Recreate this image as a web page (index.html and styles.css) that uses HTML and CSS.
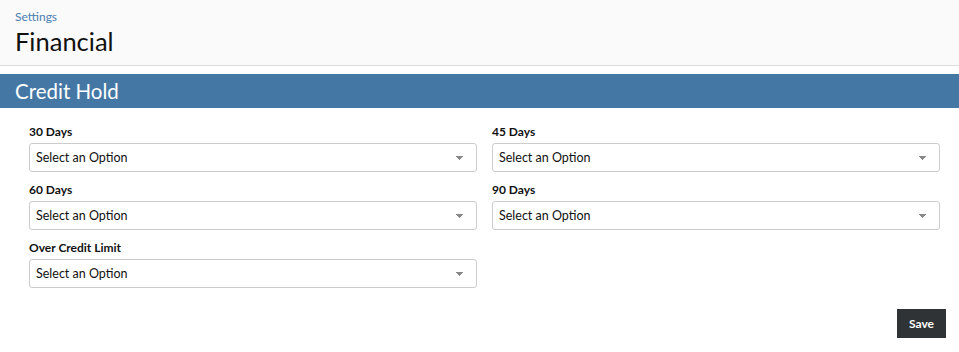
FILE: index.html
```html
<!DOCTYPE html>
<html lang="en">
<head>
    <meta charset="UTF-8">
    <meta name="viewport" content="width=device-width, initial-scale=1.0">
    <title>Financial</title>
    <link rel="stylesheet" href="styles.css">
</head>
<body>
    <div class="page-header">
        <a href="#" class="crumb">Settings</a>
        <h1>Financial</h1>
    </div>

    <div class="section-bar">Credit Hold</div>

    <form class="settings-form" id="creditHoldForm">
        <div class="field-grid">
            <div class="field">
                <label for="days30">30 Days</label>
                <select id="days30" name="days30">
                    <option>Select an Option</option>
                </select>
            </div>
            <div class="field">
                <label for="days45">45 Days</label>
                <select id="days45" name="days45">
                    <option>Select an Option</option>
                </select>
            </div>
            <div class="field">
                <label for="days60">60 Days</label>
                <select id="days60" name="days60">
                    <option>Select an Option</option>
                </select>
            </div>
            <div class="field">
                <label for="days90">90 Days</label>
                <select id="days90" name="days90">
                    <option>Select an Option</option>
                </select>
            </div>
            <div class="field">
                <label for="overLimit">Over Credit Limit</label>
                <select id="overLimit" name="overLimit">
                    <option>Select an Option</option>
                </select>
            </div>
        </div>
        <div class="actions">
            <button type="submit" class="btn">Save</button>
        </div>
    </form>
</body>
</html>
```

FILE: styles.css
```css
body {
    font-family: 'Lato', 'Liberation Sans', sans-serif;
    margin: 0;
    padding: 0;
    background-color: #fff;
    color: #111;
}
.page-header {
    background-color: #fafafa;
    border-bottom: 1px solid #dcdcdc;
    padding: 9px 15px 10px;
    height: 46px;
}
.crumb {
    display: block;
    color: #4a7db0;
    font-size: 12px;
    text-decoration: none;
    line-height: 15px;
}
h1 {
    margin: 3px 0 0;
    font-size: 25.5px;
    font-weight: 400;
    line-height: 28px;
}
.section-bar {
    margin-top: 8px;
    background-color: #4577a5;
    color: #fff;
    font-size: 20.5px;
    line-height: 34px;
    padding: 0 15px;
}
.settings-form {
    padding: 15px 19px 0 29px;
}
.field-grid {
    display: grid;
    grid-template-columns: 1fr 1fr;
    column-gap: 15px;
    row-gap: 9px;
}
.field label {
    display: block;
    font-size: 12px;
    font-weight: 700;
    line-height: 14px;
    margin: 2px 0 4px;
}
select {
    appearance: none;
    -webkit-appearance: none;
    width: 100%;
    height: 29px;
    padding: 0 28px 0 6px;
    font-family: inherit;
    font-size: 12.5px;
    color: #111;
    background-color: #fff;
    border: 1px solid #ccc;
    border-radius: 3px;
    background-image: linear-gradient(45deg, transparent 50%, #888 50%), linear-gradient(135deg, #888 50%, transparent 50%);
    background-size: 4px 4px, 4px 4px;
    background-position: right 16px top 12px, right 12px top 12px;
    background-repeat: no-repeat;
}
.actions {
    display: flex;
    justify-content: flex-end;
    margin: 21px -6px 0 0;
}
.btn {
    padding: 0 12px;
    height: 29px;
    background-color: #2f3336;
    color: white;
    border: none;
    border-radius: 0;
    font-family: inherit;
    font-size: 12px;
    font-weight: 700;
}
.btn:hover {
    background-color: #222;
}
```
